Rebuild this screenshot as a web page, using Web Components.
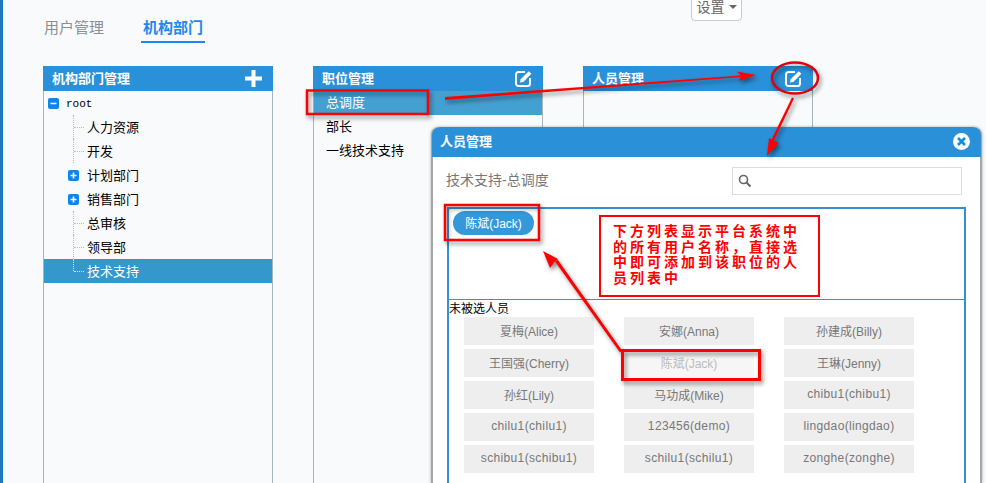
<!DOCTYPE html>
<html lang="zh">
<head>
<meta charset="utf-8">
<title>机构部门</title>
<style>
  html, body { margin: 0; height: 483px; overflow: hidden; }
  body {
    background: #f9fafc;
    font-family: "Liberation Sans", "Noto Sans CJK SC", sans-serif;
    color: #000;
  }
</style>
</head>
<body>
<admin-page>
  <top-bar slot="top"></top-bar>

  <side-panel heading="机构部门管理">
    <svg slot="action" width="17" height="17" viewBox="0 0 17 17"><path d="M6.500 0h4v6.500H17v4h-6.500V17h-4v-6.500H0v-4h6.500z" fill="#fff"/></svg>
    <tree-row kind="root">root</tree-row>
    <tree-row kind="leaf">人力资源</tree-row>
    <tree-row kind="leaf">开发</tree-row>
    <tree-row kind="plus">计划部门</tree-row>
    <tree-row kind="plus">销售部门</tree-row>
    <tree-row kind="leaf">总审核</tree-row>
    <tree-row kind="leaf">领导部</tree-row>
    <tree-row kind="last" selected>技术支持</tree-row>
  </side-panel>

  <side-panel heading="职位管理">
    <edit-icon slot="action"></edit-icon>
    <job-row selected>总调度</job-row>
    <job-row>部长</job-row>
    <job-row>一线技术支持</job-row>
  </side-panel>

  <side-panel heading="人员管理">
    <edit-icon slot="action"></edit-icon>
  </side-panel>
</admin-page>

<member-dialog heading="人员管理" subject="技术支持-总调度">
  <user-chip slot="picked">陈斌(Jack)</user-chip>
  <user-button>夏梅(Alice)</user-button>
  <user-button>安娜(Anna)</user-button>
  <user-button>孙建成(Billy)</user-button>
  <user-button>王国强(Cherry)</user-button>
  <user-button disabled>陈斌(Jack)</user-button>
  <user-button>王琳(Jenny)</user-button>
  <user-button>孙红(Lily)</user-button>
  <user-button>马功成(Mike)</user-button>
  <user-button latin>chibu1(chibu1)</user-button>
  <user-button latin>chilu1(chilu1)</user-button>
  <user-button latin>123456(demo)</user-button>
  <user-button latin>lingdao(lingdao)</user-button>
  <user-button latin>schibu1(schibu1)</user-button>
  <user-button latin>schilu1(schilu1)</user-button>
  <user-button latin>zonghe(zonghe)</user-button>
</member-dialog>

<note-layer>下方列表显示平台系统中<br>的所有用户名称，直接选<br>中即可添加到该职位的人<br>员列表中</note-layer>

<script>
class AdminPage extends HTMLElement {
  constructor () {
    super()
    this.shadow = this.attachShadow({ mode: 'open' })
  }

  connectedCallback () {
    this.shadow.innerHTML = /* html */`
    <style>
      :host {
        display: flex;
        flex-direction: column;
        height: 483px;
        box-sizing: border-box;
        border-left: 3px solid #1f78b8;
        padding-left: 40px;
      }
      .columns {
        display: flex;
        gap: 40px;
        flex: 1;
        min-height: 0;
      }
    </style>
    <slot name="top"></slot>
    <div class="columns"><slot></slot></div>
    `
  }
}

class TopBar extends HTMLElement {
  constructor () {
    super()
    this.shadow = this.attachShadow({ mode: 'open' })
  }

  connectedCallback () {
    this.shadow.innerHTML = /* html */`
    <style>
      :host {
        display: flex;
        align-items: flex-start;
        height: 66px;
      }
      .tab {
        font-size: 15px;
        line-height: 23px;
        margin-top: 16px;
        padding: 0 2px 2px;
        color: #8a8f94;
        border-bottom: 2px solid transparent;
      }
      .first { margin-left: -1px; margin-right: 35px; }
      .current {
        color: #1e88f0;
        font-weight: bold;
        border-bottom-color: #1e88f0;
      }
      .settings {
        margin-left: 486px;
        margin-top: -12px;
        width: 51px;
        height: 33px;
        box-sizing: border-box;
        display: flex;
        align-items: flex-end;
        justify-content: center;
        gap: 4px;
        padding-bottom: 6px;
        background: #fff;
        border: 1px solid #ccc;
        border-radius: 4px;
        font-size: 14px;
        line-height: 14px;
        color: #666;
      }
      .caret {
        width: 0;
        height: 0;
        margin-bottom: 5px;
        border: 4px solid transparent;
        border-top: 4px solid #666;
        border-bottom: 0;
      }
    </style>
    <div class="tab first">用户管理</div>
    <div class="tab current">机构部门</div>
    <div class="settings">设置<span class="caret"></span></div>
    `
  }
}

class SidePanel extends HTMLElement {
  constructor () {
    super()
    this.shadow = this.attachShadow({ mode: 'open' })
  }

  connectedCallback () {
    this.shadow.innerHTML = /* html */`
    <style>
      :host {
        display: flex;
        flex-direction: column;
        width: 230px;
      }
      header {
        display: flex;
        align-items: center;
        justify-content: space-between;
        height: 25px;
        padding: 0 11px 0 9px;
        background: #2a90d8;
        color: #fff;
        font-size: 13px;
        font-weight: bold;
      }
      header span { padding-bottom: 2px; }
      .body {
        flex: 1;
        border: solid #a9b4bc;
        border-width: 0 1px;
      }
    </style>
    <header><span>${this.getAttribute('heading')}</span><slot name="action"></slot></header>
    <div class="body"><slot></slot></div>
    `
  }
}

class EditIcon extends HTMLElement {
  constructor () {
    super()
    this.shadow = this.attachShadow({ mode: 'open' })
  }

  connectedCallback () {
    this.shadow.innerHTML = /* html */`
    <style>
      :host { display: block; width: 17px; height: 17px; }
      svg { display: block; }
    </style>
    <svg width="17" height="17" viewBox="0 0 17 17">
      <path d="M10 2H3.500A2.500 2.500 0 0 0 1 4.500v9A2.500 2.500 0 0 0 3.500 16h9a2.500 2.500 0 0 0 2.500-2.500V8" fill="none" stroke="#fff" stroke-width="2"/>
      <path d="M5 12.500l.7-3.200L13.800 1.200l2.600 2.600-8.100 8.100z" fill="#fff"/>
    </svg>
    `
  }
}

class TreeRow extends HTMLElement {
  constructor () {
    super()
    this.shadow = this.attachShadow({ mode: 'open' })
  }

  connectedCallback () {
    const kind = this.getAttribute('kind')
    const sign = kind === 'root'
      ? '<path d="M2.500 5.500h6" stroke="#fff" stroke-width="1.500"/>'
      : '<path d="M2.500 5.500h6M5.500 2.500v6" stroke="#fff" stroke-width="1.500"/>'
    const box = `<svg width="11" height="11" viewBox="0 0 11 11"><rect width="11" height="11" rx="2" fill="#0a86f0"/>${sign}</svg>`
    const isBox = kind === 'root' || kind === 'plus'

    this.shadow.innerHTML = /* html */`
    <style>
      :host {
        display: flex;
        align-items: center;
        height: 24px;
        padding-left: ${kind === 'root' ? 4 : 24}px;
        font-size: 13px;
        color: #000;
      }
      :host([selected]) { background: #3498cc; color: #fff; }
      .lead {
        position: relative;
        flex: none;
        display: flex;
        align-items: center;
        width: ${kind === 'root' ? 18 : 19}px;
        height: 24px;
      }
      svg { display: block; }
      .text {
        font-family: ${kind === 'root' ? '"Liberation Mono", monospace' : 'inherit'};
        font-size: ${kind === 'root' ? 11 : 13}px;
        padding-top: ${kind === 'root' ? 2 : 0}px;
        padding-bottom: ${kind === 'root' ? 0 : 1}px;
      }
      .line-v, .line-h { position: absolute; display: ${isBox ? 'none' : 'block'}; }
      .line-v { left: 5px; top: 0; height: ${kind === 'last' ? 12 : 24}px; border-left: 1px dotted #bbb; }
      .line-h { left: 6px; top: 12px; width: 10px; border-top: 1px dotted #bbb; }
      :host([selected]) .line-v, :host([selected]) .line-h { border-color: #d5e6f2; }
    </style>
    <span class="lead">
      <span class="line-v"></span><span class="line-h"></span>
      ${isBox ? box : ''}
    </span>
    <span class="text"><slot></slot></span>
    `
  }
}

class JobRow extends HTMLElement {
  constructor () {
    super()
    this.shadow = this.attachShadow({ mode: 'open' })
  }

  connectedCallback () {
    this.shadow.innerHTML = /* html */`
    <style>
      :host {
        display: flex;
        align-items: center;
        box-sizing: border-box;
        height: 24px;
        padding: 0 0 4px 12px;
        font-size: 13px;
        color: #000;
      }
      :host([selected]) { background: #45a0d2; color: #fff; }
    </style>
    <slot></slot>
    `
  }
}

class MemberDialog extends HTMLElement {
  constructor () {
    super()
    this.shadow = this.attachShadow({ mode: 'open' })
  }

  connectedCallback () {
    this.shadow.innerHTML = /* html */`
    <style>
      :host {
        position: absolute;
        left: 431px;
        top: 127px;
        width: 551px;
        height: 356px;
        box-sizing: border-box;
        background: #fff;
        border: solid #a8a8a8;
        border-width: 0 2px;
        border-radius: 8px 8px 0 0;
        box-shadow: 0 0 3px rgba(0, 0, 0, .35);
      }
      header {
        display: flex;
        align-items: center;
        justify-content: space-between;
        height: 30px;
        margin: 0 -1px;
        padding: 0 11px 0 8px;
        background: #2a90d8;
        border-radius: 8px 8px 0 0;
        color: #fff;
        font-size: 13px;
        font-weight: bold;
      }
      header span { padding-bottom: 4px; }
      header svg { display: block; margin-bottom: 2px; }
      .subject {
        display: flex;
        align-items: center;
        justify-content: space-between;
        height: 28px;
        margin: 10px 18px 12px 13px;
        font-size: 14px;
        color: #777;
      }
      .subject span { padding-bottom: 4px; }
      .search {
        display: flex;
        align-items: center;
        box-sizing: border-box;
        width: 230px;
        height: 28px;
        padding-left: 5px;
        border: 1px solid #ddd;
        background: #fff;
      }
      .search svg { display: block; }
      .box {
        margin: 0 14px;
        border: solid #3490d0;
        border-width: 2px 2px 0;
        height: 274px;
      }
      .picked {
        height: 91px;
        padding: 2px 4px;
        box-sizing: border-box;
        border-bottom: 1px solid #3a90c8;
      }
      .label {
        height: 17px;
        font-size: 12px;
        line-height: 19px;
        color: #000;
      }
      .users {
        display: grid;
        grid-template-columns: repeat(3, 130px);
        column-gap: 30px;
        row-gap: 4px;
        padding-left: 15px;
      }
    </style>
    <header>
      <span>${this.getAttribute('heading')}</span>
      <svg width="17" height="17" viewBox="0 0 17 17">
        <circle cx="8.500" cy="8.500" r="8.500" fill="#fff"/>
        <path d="M5 5l7 7M12 5l-7 7" stroke="#0a8ee0" stroke-width="2.600"/>
      </svg>
    </header>
    <div class="subject">
      <span>${this.getAttribute('subject')}</span>
      <div class="search">
        <svg width="14" height="14" viewBox="0 0 14 14">
          <circle cx="5.500" cy="5.500" r="4" fill="none" stroke="#666" stroke-width="1.600"/>
          <path d="M8.500 8.500l4 4" stroke="#666" stroke-width="2"/>
        </svg>
      </div>
    </div>
    <div class="box">
      <div class="picked"><slot name="picked"></slot></div>
      <div class="label">未被选人员</div>
      <div class="users"><slot></slot></div>
    </div>
    `
  }
}

class UserChip extends HTMLElement {
  constructor () {
    super()
    this.shadow = this.attachShadow({ mode: 'open' })
  }

  connectedCallback () {
    this.shadow.innerHTML = /* html */`
    <style>
      :host {
        display: inline-flex;
        align-items: center;
        justify-content: center;
        box-sizing: border-box;
        width: 81px;
        height: 24px;
        padding-bottom: 2px;
        border-radius: 12px;
        background: #3498db;
        color: #fff;
        font-size: 12px;
      }
    </style>
    <slot></slot>
    `
  }
}

class UserButton extends HTMLElement {
  constructor () {
    super()
    this.shadow = this.attachShadow({ mode: 'open' })
  }

  connectedCallback () {
    this.shadow.innerHTML = /* html */`
    <style>
      :host {
        display: flex;
        align-items: center;
        justify-content: center;
        box-sizing: border-box;
        height: 28px;
        padding-bottom: 2px;
        background: #eee;
        color: #777;
        font-size: 12px;
      }
      :host([latin]) { letter-spacing: .35px; }
      :host([disabled]) { background: #f6f6f6; color: #bbb; }
    </style>
    <slot></slot>
    `
  }
}

class NoteLayer extends HTMLElement {
  constructor () {
    super()
    this.shadow = this.attachShadow({ mode: 'open' })
  }

  connectedCallback () {
    this.shadow.innerHTML = /* html */`
    <style>
      :host {
        position: absolute;
        left: 0;
        top: 0;
        width: 986px;
        height: 483px;
        pointer-events: none;
      }
      svg {
        position: absolute;
        left: 0;
        top: 0;
        filter: drop-shadow(2px 3px 2px rgba(0, 0, 0, .45));
      }
      .note {
        position: absolute;
        left: 599px;
        top: 215px;
        box-sizing: border-box;
        width: 221px;
        height: 82px;
        padding: 7px 0 0 12px;
        background: #fff;
        border: 2px solid #f00;
        color: #f00;
        font-size: 14px;
        font-weight: bold;
        line-height: 15.700px;
        letter-spacing: 3px;
        white-space: nowrap;
      }
    </style>
    <svg width="986" height="483" viewBox="0 0 986 483" fill="none" stroke="#f00">
      <rect x="307" y="90.500" width="121" height="23.500" stroke-width="2.500"/>
      <rect x="445" y="205" width="94" height="35" stroke-width="2.500"/>
      <rect x="622.500" y="350.500" width="137" height="29" stroke-width="3"/>
      <ellipse cx="795" cy="78" rx="23" ry="15.500" stroke="#e00010" stroke-width="2.500"/>
      <g fill="#f00" stroke="none">
        <path d="M445 97l296-21.500 .3 1.500L445 100z"/>
        <path d="M756 75l-19-3.500 4.500 4.500-3 5z"/>
        <path d="M792 97.500l2 1-20.500 43-2.500-1z"/>
        <path d="M767 156l2-18 4.500 2.500 5.500 2.500z"/>
        <path d="M622 350.500l-2 2-65-91 2.500-2z"/>
        <path d="M543 251l15 8-3.500 3-4.500 6z"/>
      </g>
    </svg>
    <div class="note"><slot></slot></div>
    `
  }
}

customElements.define('admin-page', AdminPage)
customElements.define('top-bar', TopBar)
customElements.define('side-panel', SidePanel)
customElements.define('edit-icon', EditIcon)
customElements.define('tree-row', TreeRow)
customElements.define('job-row', JobRow)
customElements.define('member-dialog', MemberDialog)
customElements.define('user-chip', UserChip)
customElements.define('user-button', UserButton)
customElements.define('note-layer', NoteLayer)
</script>
</body>
</html>
